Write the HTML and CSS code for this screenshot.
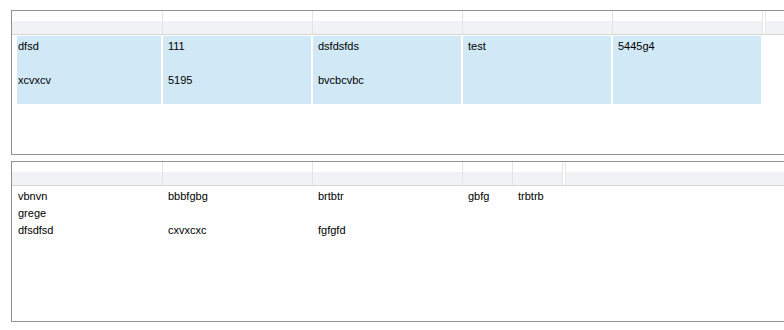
FILE: index.html
```html
<!DOCTYPE html>
<html lang="en">
<head>
  <meta charset="UTF-8">
  <title>List views</title>
  <link rel="stylesheet" href="styles.css">
</head>
<body>
  <!-- Top list: two tall selected rows -->
  <div class="list list-top">
    <div class="header cols-top">
      <div class="hcell"></div>
      <div class="hcell"></div>
      <div class="hcell"></div>
      <div class="hcell"></div>
      <div class="hcell"></div>
      <div class="hcell filler"></div>
    </div>
    <div class="rows">
      <div class="row tall cols-top">
        <div class="cell sel first">dfsd</div>
        <div class="cell sel">111</div>
        <div class="cell sel">dsfdsfds</div>
        <div class="cell sel">test</div>
        <div class="cell sel">5445g4</div>
      </div>
      <div class="row tall cols-top">
        <div class="cell sel first">xcvxcv</div>
        <div class="cell sel">5195</div>
        <div class="cell sel">bvcbcvbc</div>
        <div class="cell sel"></div>
        <div class="cell sel"></div>
      </div>
    </div>
  </div>

  <!-- Bottom list: plain rows -->
  <div class="list list-bottom">
    <div class="header cols-bottom">
      <div class="hcell"></div>
      <div class="hcell"></div>
      <div class="hcell"></div>
      <div class="hcell"></div>
      <div class="hcell"></div>
      <div class="hcell filler"></div>
    </div>
    <div class="rows rows-plain">
      <div class="row cols-bottom">
        <div class="cell first">vbnvn</div>
        <div class="cell">bbbfgbg</div>
        <div class="cell">brtbtr</div>
        <div class="cell">gbfg</div>
        <div class="cell">trbtrb</div>
      </div>
      <div class="row cols-bottom">
        <div class="cell first">grege</div>
        <div class="cell"></div>
        <div class="cell"></div>
        <div class="cell"></div>
        <div class="cell"></div>
      </div>
      <div class="row cols-bottom">
        <div class="cell first">dfsdfsd</div>
        <div class="cell">cxvxcxc</div>
        <div class="cell">fgfgfd</div>
        <div class="cell"></div>
        <div class="cell"></div>
      </div>
    </div>
  </div>
</body>
</html>
```

FILE: styles.css
```css
html, body {
  overflow: hidden;
}

body {
  margin: 10px 0 0 11px;
  background-color: #fff;
  font-family: 'Liberation Sans', Arial, sans-serif;
  font-size: 11px;
  color: #000;
}

.list {
  width: 790px;
  border: 1px solid #8f9092;
  background-color: #fff;
  box-sizing: border-box;
}

.list-top {
  height: 145px;
}

.list-bottom {
  height: 161px;
  margin-top: 6px;
}

.cols-top {
  display: grid;
  grid-template-columns: 150px 150px 150px 150px 150px 1fr;
}

.cols-bottom {
  display: grid;
  grid-template-columns: 150px 150px 150px 50px 50px 1fr;
}

.header {
  height: 23px;
  border-bottom: 1px solid #d5d6d8;
  background: linear-gradient(#fff 0, #fff 10px, #f1f2f4 10px, #f1f2f4 100%);
}

.hcell + .hcell {
  border-left: 1px solid #e3e4e6;
}

.hcell.filler {
  box-shadow: inset 2px 0 #fff, inset 3px 0 #e6e8ea;
}

.rows {
  padding-top: 1px;
}

.rows-plain {
  padding-top: 2px;
}

.row.tall {
  height: 34px;
}

.row .cell {
  white-space: nowrap;
  line-height: 17px;
  padding-left: 6px;
}

.row.tall .cell {
  line-height: 13px;
  padding: 4px 0 0 5px;
  margin: 0 1px;
}

.row.tall .cell.first {
  margin-left: 5px;
  padding-left: 1px;
}

.sel {
  background-color: #d1e9f6;
}
```
